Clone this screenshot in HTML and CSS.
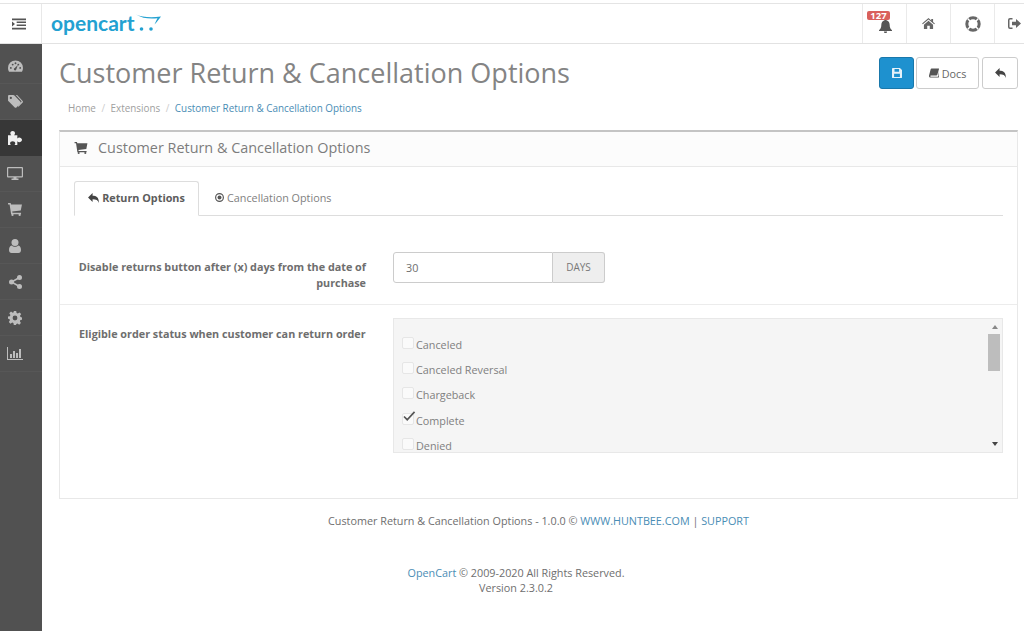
FILE: index.html
```html
<!DOCTYPE html>
<html lang="en">
<head>
    <meta charset="UTF-8">
    <title>Customer Return &amp; Cancellation Options</title>
    <link rel="stylesheet" href="styles.css">
</head>
<body>
    <header id="header">
        <div class="menu-toggle">
            <svg width="14" height="12" viewBox="0 0 15 12"><path d="M0 0h15v2H0zM5 3.300h10v1.600H5zM5 6.600h10v1.600H5zM0 10h15v2H0zM0 3.200l3.200 2.800L0 8.800z" fill="#555"/></svg>
        </div>
        <div class="logo">
            <span class="logo-text">opencart</span>
            <svg class="logo-cart" width="25" height="18" viewBox="0 0 25 18"><path d="M0 .5C6 3 14 4 25 2.500c-1.500 2-4 5.500-6.500 8 1-2.500 2.200-4.800 3-6.200C13 5.200 6 4.200 0 .5z" fill="#23a1d1"/><circle cx="5.500" cy="15" r="1.800" fill="#23a1d1"/><circle cx="15" cy="15" r="1.800" fill="#23a1d1"/></svg>
        </div>
        <ul class="header-nav">
            <li class="notify">
                <span class="badge">127</span>
                <svg width="13" height="14" viewBox="0 0 14 15"><path d="M7 0a1 1 0 0 1 1 1.200C10.500 1.700 11.500 4 11.500 6.500c0 3 1 4.500 2.500 5.500v1H0v-1c1.500-1 2.500-2.500 2.500-5.500C2.500 4 3.500 1.700 6 1.200A1 1 0 0 1 7 0zM5.300 13.500h3.400A1.700 1.700 0 0 1 5.300 13.500z" fill="#555"/></svg>
            </li>
            <li>
                <svg width="13" height="11" viewBox="0 0 14 12"><path d="M7 0l3 2.600V1h2v3.300L14 6l-.8.9L7 1.600.8 6.900 0 6zM2 7.300L7 3l5 4.300V12H8.400V8.500H5.600V12H2z" fill="#666"/></svg>
            </li>
            <li>
                <svg width="16" height="16" viewBox="0 0 16 16"><circle cx="8" cy="8" r="6.200" fill="none" stroke="#666" stroke-width="3"/><path d="M2.600 2.600l2.800 2.800M13.400 2.600l-2.800 2.800M2.600 13.400l2.800-2.800M13.400 13.400l-2.800-2.800" stroke="#fff" stroke-width="1.400"/></svg>
            </li>
            <li class="logout">
                <svg width="13" height="11" viewBox="0 0 13 11"><path d="M4.500 0v1.500H2A.6.600 0 0 0 1.500 2v7c0 .3.200.500.500.500h2.500V11H2a2 2 0 0 1-2-2V2a2 2 0 0 1 2-2zM8 1l5 4.500L8 10V7.300H4V3.700h4z" fill="#666"/></svg>
            </li>
        </ul>
    </header>

    <div id="wrapper">
        <aside id="column-left">
            <a class="nav-item">
                <svg width="15" height="12" viewBox="0 0 16 12"><path d="M8 0a8 8 0 0 1 8 8c0 1.500-.4 2.900-1.100 4H1.100A8 8 0 0 1 0 8a8 8 0 0 1 8-8zM3 7a1 1 0 1 0 0 2 1 1 0 0 0 0-2zm2-3.500a1 1 0 1 0 0 2 1 1 0 0 0 0-2zM8 2a1 1 0 1 0 0 2 1 1 0 0 0 0-2zm3 1.500a1 1 0 1 0 0 2 1 1 0 0 0 0-2zM13 7a1 1 0 1 0 0 2 1 1 0 0 0 0-2zM10.500 5L7.200 8.200a1.300 1.300 0 1 0 1.600 1.500z" fill="#bdbdbd" fill-rule="evenodd"/></svg>
            </a>
            <a class="nav-item">
                <svg width="15" height="14" viewBox="0 0 16 15"><path d="M0 1.200C0 .5.500 0 1.200 0h4.300c.5 0 1 .2 1.400.6l6.400 6.500c.5.500.5 1.300 0 1.800l-4.300 4.400c-.5.500-1.300.5-1.800 0L.6 6.800C.2 6.400 0 6 0 5.500zM3 2a1.200 1.200 0 1 0 0 2.400A1.200 1.200 0 0 0 3 2z" fill="#bdbdbd" fill-rule="evenodd"/><path d="M8.300 0h1.400l6 6.300c.4.500.4 1.300 0 1.800l-4.500 4.600-1-.9 4-4.200c.3-.3.300-.8 0-1.100z" fill="#bdbdbd"/></svg>
            </a>
            <a class="nav-item active">
                <svg width="14" height="14" viewBox="0 0 15 15"><path d="M0 4.500h3.500c-.8-.8-1-1.500-1-2.200C2.500 1 3.700 0 5 0s2.500 1 2.500 2.300c0 .7-.3 1.400-1 2.200H10V8c.7-.8 1.400-1 2-1 1.500 0 3 1 3 2.500S13.500 12 12 12c-.6 0-1.300-.3-2-1v4H7c.5-.7.800-1.300.8-1.900C7.800 12 6.500 11 5 11s-2.800 1-2.800 2.100c0 .6.300 1.200.8 1.900H0z" fill="#f0f0f0"/></svg>
            </a>
            <a class="nav-item">
                <svg width="16" height="13" viewBox="0 0 16 13"><path d="M1 0h14a1 1 0 0 1 1 1v8.500a1 1 0 0 1-1 1H9.500v1h2V13h-7v-1.500h2v-1H1a1 1 0 0 1-1-1V1a1 1 0 0 1 1-1zm.2 1.200v8.100h13.600V1.200z" fill="#bdbdbd" fill-rule="evenodd"/></svg>
            </a>
            <a class="nav-item">
                <svg width="14" height="13" viewBox="0 0 15 14"><path d="M0 0h2.800l.4 1.500H15l-1.300 6.700-9.200 1 .3 1.300h9.200V12H3.300L1.700 1.500H0z" fill="#bdbdbd"/><circle cx="4.800" cy="12.800" r="1.200" fill="#bdbdbd"/><circle cx="12.500" cy="12.800" r="1.200" fill="#bdbdbd"/></svg>
            </a>
            <a class="nav-item">
                <svg width="12" height="14" viewBox="0 0 12 14"><circle cx="6" cy="3.500" r="3.500" fill="#bdbdbd"/><path d="M2.500 6.500C3.500 7.300 4.700 7.800 6 7.800s2.500-.5 3.500-1.300C11 6.800 12 8.500 12 11c0 1.800-1 3-2.500 3h-7C1 14 0 12.800 0 11c0-2.500 1-4.200 2.500-4.500z" fill="#bdbdbd"/></svg>
            </a>
            <a class="nav-item">
                <svg width="13" height="14" viewBox="0 0 13 14"><circle cx="10.500" cy="2.500" r="2.500" fill="#bdbdbd"/><circle cx="2.500" cy="7" r="2.500" fill="#bdbdbd"/><circle cx="10.500" cy="11.500" r="2.500" fill="#bdbdbd"/><path d="M10.500 2.500L2.500 7l8 4.500" fill="none" stroke="#bdbdbd" stroke-width="1.500"/></svg>
            </a>
            <a class="nav-item">
                <svg width="14" height="14" viewBox="0 0 14 14"><path d="M5.800 0h2.400l.4 2 1.200.5L11.500 1.400l1.700 1.700L12 4.800l.5 1.200 1.500.4v2.300l-1.600.4-.5 1.200 1 1.700-1.700 1.700-1.700-1.100-1.200.5L8 14H5.800l-.4-1.900-1.200-.5-1.700 1.100L.8 11l1.100-1.700-.5-1.200L0 7.800V5.500l1.900-.3.500-1.200-1.100-1.700L3 .6l1.700 1.100 1-.4zM7 4.600a2.400 2.400 0 1 0 0 4.800 2.400 2.400 0 0 0 0-4.800z" fill="#bdbdbd" fill-rule="evenodd"/></svg>
            </a>
            <a class="nav-item">
                <svg width="16" height="13" viewBox="0 0 16 13"><path d="M0 0h1v12h15v1H0zM3 7h2v4H3zM6 4h2v7H6zM9 6h2v5H9zM12 2h2v9h-2z" fill="#bdbdbd"/></svg>
            </a>
        </aside>

        <main id="content">
            <div class="page-header">
                <div class="page-title">
                    <h1>Customer Return &amp; Cancellation Options</h1>
                    <ul class="breadcrumb">
                        <li>Home</li>
                        <li>Extensions</li>
                        <li><a href="#">Customer Return &amp; Cancellation Options</a></li>
                    </ul>
                </div>
                <div class="page-actions">
                    <button class="btn btn-primary">
                        <svg width="10" height="10" viewBox="0 0 12 12"><path d="M1 0h8.500L12 2.500V11a1 1 0 0 1-1 1H1a1 1 0 0 1-1-1V1a1 1 0 0 1 1-1zm2 1.200v3.300h5.500V1.200zM2.500 7v3.800h7V7z" fill="#e6f2f9" fill-rule="evenodd"/></svg>
                    </button>
                    <button class="btn btn-docs">
                        <svg width="10" height="10" viewBox="0 0 12 11"><path d="M3 0h8.500c.5 0 .6.400.5.800L10 7.500c-.2.600-.5.900-1.200.9H2.300c-.5 0-.8.300-.8.800s.3.800.8.800h8.300c.3 0 .5-.2.600-.5L12 3l.1 6.800c-.1.600-.5 1.200-1 1.200H2C.9 11 0 10.200 0 9c0-.4.100-.8.200-1.200L2 1c.2-.6.500-1 1-1z" fill="#555"/></svg>
                        Docs
                    </button>
                    <button class="btn btn-back">
                        <svg width="11" height="10" viewBox="0 0 12 11"><path d="M5 0v3c4 0 7 1.500 7 8-1-3-3-4-7-4v3L0 5z" fill="#444"/></svg>
                    </button>
                </div>
            </div>

            <section class="panel">
                <div class="panel-heading">
                    <svg width="14" height="12" viewBox="0 0 15 14"><path d="M0 0h2.800l.4 1.500H15l-1.300 6.700-9.200 1 .3 1.300h9.200V12H3.300L1.700 1.500H0z" fill="#555"/><circle cx="4.800" cy="12.800" r="1.200" fill="#555"/><circle cx="12.500" cy="12.800" r="1.200" fill="#555"/></svg>
                    <h3>Customer Return &amp; Cancellation Options</h3>
                </div>
                <div class="panel-body">
                    <ul class="nav-tabs">
                        <li class="tab selected">
                            <svg width="11" height="10" viewBox="0 0 12 11"><path d="M5 0v3c4 0 7 1.500 7 8-1-3-3-4-7-4v3L0 5z" fill="#444"/></svg>
                            Return Options
                        </li>
                        <li class="tab">
                            <svg width="9" height="9" viewBox="0 0 10 10"><circle cx="5" cy="5" r="4.300" fill="none" stroke="#555" stroke-width="1.300"/><circle cx="5" cy="5" r="2.200" fill="#555"/></svg>
                            Cancellation Options
                        </li>
                    </ul>

                    <div class="form-row first">
                        <label>Disable returns button after (x) days from the date of purchase</label>
                        <div class="field input-group">
                            <input type="text" value="30">
                            <span class="addon">DAYS</span>
                        </div>
                    </div>

                    <div class="form-row">
                        <label>Eligible order status when customer can return order</label>
                        <div class="field well">
                            <div class="well-list">
                                <div class="check"><span class="box"></span>Canceled</div>
                                <div class="check"><span class="box"></span>Canceled Reversal</div>
                                <div class="check"><span class="box"></span>Chargeback</div>
                                <div class="check"><span class="box">
                                    <svg width="13" height="11" viewBox="0 0 14 12"><path d="M1 6l3.500 3.500L12.500 1" fill="none" stroke="#555" stroke-width="1.800"/></svg>
                                </span>Complete</div>
                                <div class="check"><span class="box"></span>Denied</div>
                            </div>
                            <div class="scroller">
                                <span class="arrow up"></span>
                                <span class="thumb"></span>
                                <span class="arrow down"></span>
                            </div>
                        </div>
                    </div>
                </div>
            </section>

            <p class="ext-footer">Customer Return &amp; Cancellation Options - 1.0.0 &copy; <a href="#">WWW.HUNTBEE.COM</a> | <a href="#">SUPPORT</a></p>

            <footer id="footer">
                <a href="#">OpenCart</a> &copy; 2009-2020 All Rights Reserved.<br>
                Version 2.3.0.2
            </footer>
        </main>
    </div>
</body>
</html>
```

FILE: styles.css
```css
* {
    margin: 0;
    padding: 0;
    box-sizing: border-box;
}

html, body {
    height: 631px;
    overflow: hidden;
}

body {
    font-family: "Open Sans", sans-serif;
    font-size: 10.8px;
    color: #6e6e6e;
    background: #fff;
    padding-top: 3px;
}

a {
    color: #4a8db5;
    text-decoration: none;
}

ul {
    list-style: none;
}

#header {
    display: flex;
    align-items: stretch;
    height: 41px;
    border-top: 1px solid #e4e4e4;
    border-bottom: 1px solid #e2e2e2;
    overflow: hidden;
}

.menu-toggle {
    width: 42px;
    flex: none;
    display: flex;
    align-items: center;
    justify-content: center;
    padding-right: 4px;
    border-right: 1px solid #e8e8e8;
}

.logo {
    display: flex;
    align-items: center;
    padding-left: 9px;
    flex: 1;
}

.logo-text {
    font-family: "Lato", sans-serif;
    font-weight: 700;
    font-size: 21px;
    color: #23a1d1;
    line-height: 1;
    margin-top: -3px;
}

.logo-cart {
    margin: -1px 0 0 2px;
}

.header-nav {
    display: flex;
    margin-right: -14px;
}

.header-nav li {
    width: 44px;
    flex: none;
    display: flex;
    align-items: center;
    justify-content: center;
    border-left: 1px solid #eaeaea;
    position: relative;
}

.header-nav .notify svg {
    margin: 4px 0 0 2px;
}

.header-nav .logout {
    padding-right: 4px;
}

.badge {
    position: absolute;
    top: 7px;
    left: 4px;
    width: 23px;
    background: #d9605c;
    color: #fff;
    font-size: 9.500px;
    font-weight: 700;
    line-height: 9px;
    text-align: center;
    border-radius: 2px;
}

#wrapper {
    display: flex;
    height: 587px;
}

#column-left {
    width: 42px;
    flex: none;
    background: #515151;
    padding-top: 4px;
}

.nav-item {
    display: flex;
    align-items: center;
    justify-content: center;
    height: 36px;
    padding-right: 12px;
    border-bottom: 1px solid #575757;
}

.nav-item.active {
    background: #373737;
    border-bottom-color: #373737;
}

#content {
    flex: 1;
    min-width: 0;
    padding: 0 6px 0 17px;
}

.page-header {
    display: flex;
    justify-content: space-between;
    height: 86px;
}

.page-title h1 {
    font-size: 27px;
    font-weight: 400;
    color: #848484;
    line-height: 36px;
    margin-top: 11px;
}

.breadcrumb {
    display: flex;
    margin: 9px 0 0 9px;
    font-size: 9.900px;
    line-height: 16px;
    color: #a0a0a0;
}

.breadcrumb li + li::before {
    content: "/";
    color: #ccc;
    padding: 0 5.500px;
}

.page-actions {
    display: flex;
    gap: 2px;
    margin-top: 13px;
    height: 32px;
}

.btn {
    display: flex;
    align-items: center;
    justify-content: center;
    gap: 3px;
    font-family: inherit;
    font-size: 10.800px;
    color: #666;
    background: #fff;
    border: 1px solid #ccc;
    border-radius: 3px;
}

.btn-primary {
    width: 35px;
    background: #1e91cf;
    border-color: #1978ab;
}

.btn-docs {
    width: 63px;
}

.btn-back {
    width: 36px;
    margin-left: 1px;
}

.panel {
    height: 369px;
    border: 1px solid #e8e8e8;
    border-top: 2px solid #c4c4c4;
}

.panel-heading {
    display: flex;
    align-items: center;
    gap: 10px;
    height: 35px;
    padding: 0 0 3px 14px;
    background: #fcfcfc;
    border-bottom: 1px solid #e8e8e8;
}

.panel-heading h3 {
    font-size: 14.400px;
    font-weight: 400;
    color: #7c7c7c;
}

.panel-body {
    padding: 14px 14px 0;
}

.nav-tabs {
    display: flex;
    height: 35px;
    border-bottom: 1px solid #ddd;
}

.tab {
    display: flex;
    align-items: center;
    justify-content: center;
    gap: 3px;
    height: 35px;
    padding: 0 16px 2px;
    color: #808080;
}

.tab.selected {
    width: 125px;
    padding: 0 0 2px;
    font-weight: 700;
    color: #5c5c5c;
    background: #fff;
    border: 1px solid #ddd;
    border-bottom-color: #fff;
    border-radius: 3px 3px 0 0;
}

.form-row {
    display: flex;
    margin: 0 -14px;
    padding: 13px 14px;
    border-top: 1px solid #ececec;
}

.form-row.first {
    border-top: none;
    margin-top: 21px;
    padding-top: 15px;
}

.form-row label {
    width: 292px;
    flex: none;
    margin: 7px 27px 0 0;
    font-weight: 700;
    line-height: 16px;
    color: #6e6e6e;
    text-align: right;
}

.form-row:not(.first) label {
    padding-left: 5px;
    margin-top: 8px;
    text-align: left;
    white-space: nowrap;
}

.input-group {
    display: flex;
    height: 31px;
    width: 212px;
}

.input-group input {
    width: 160px;
    border: 1px solid #ccc;
    border-radius: 3px 0 0 3px;
    padding: 0 12px 1px;
    font-family: inherit;
    font-size: 10.800px;
    color: #6e6e6e;
}

.addon {
    flex: 1;
    display: flex;
    align-items: center;
    justify-content: center;
    padding-bottom: 2px;
    background: #eee;
    border: 1px solid #ccc;
    border-left: none;
    border-radius: 0 3px 3px 0;
    font-size: 10px;
    color: #777;
}

.well {
    display: flex;
    flex: 1;
    height: 135px;
    background: #f5f5f5;
    border: 1px solid #e8e8e8;
    overflow: hidden;
}

.well-list {
    flex: 1;
    padding: 13px 0 0 8px;
    overflow: hidden;
}

.check {
    display: flex;
    align-items: center;
    height: 25.200px;
    color: #808080;
}

.box {
    width: 12px;
    height: 12px;
    margin: -3px 2px 0 0;
    background: #fafafa;
    border: 1px solid #e6e6e6;
    border-radius: 2px;
    position: relative;
}

.box svg {
    position: absolute;
    top: -3px;
    left: 0;
}

.scroller {
    width: 15px;
    position: relative;
    display: flex;
    justify-content: center;
}

.thumb {
    position: absolute;
    top: 15px;
    left: 1px;
    width: 12px;
    height: 37px;
    background: #bdbdbd;
}

.arrow {
    position: absolute;
    width: 0;
    height: 0;
    border-left: 3px solid transparent;
    border-right: 3px solid transparent;
}

.arrow.up {
    top: 6px;
    border-bottom: 4px solid #888;
}

.arrow.down {
    bottom: 6px;
    border-top: 4px solid #444;
}

.ext-footer {
    margin-top: 14px;
    text-align: center;
    line-height: 16px;
}

#footer {
    margin-top: 36px;
    padding-right: 45px;
    text-align: center;
    line-height: 15px;
}
```
